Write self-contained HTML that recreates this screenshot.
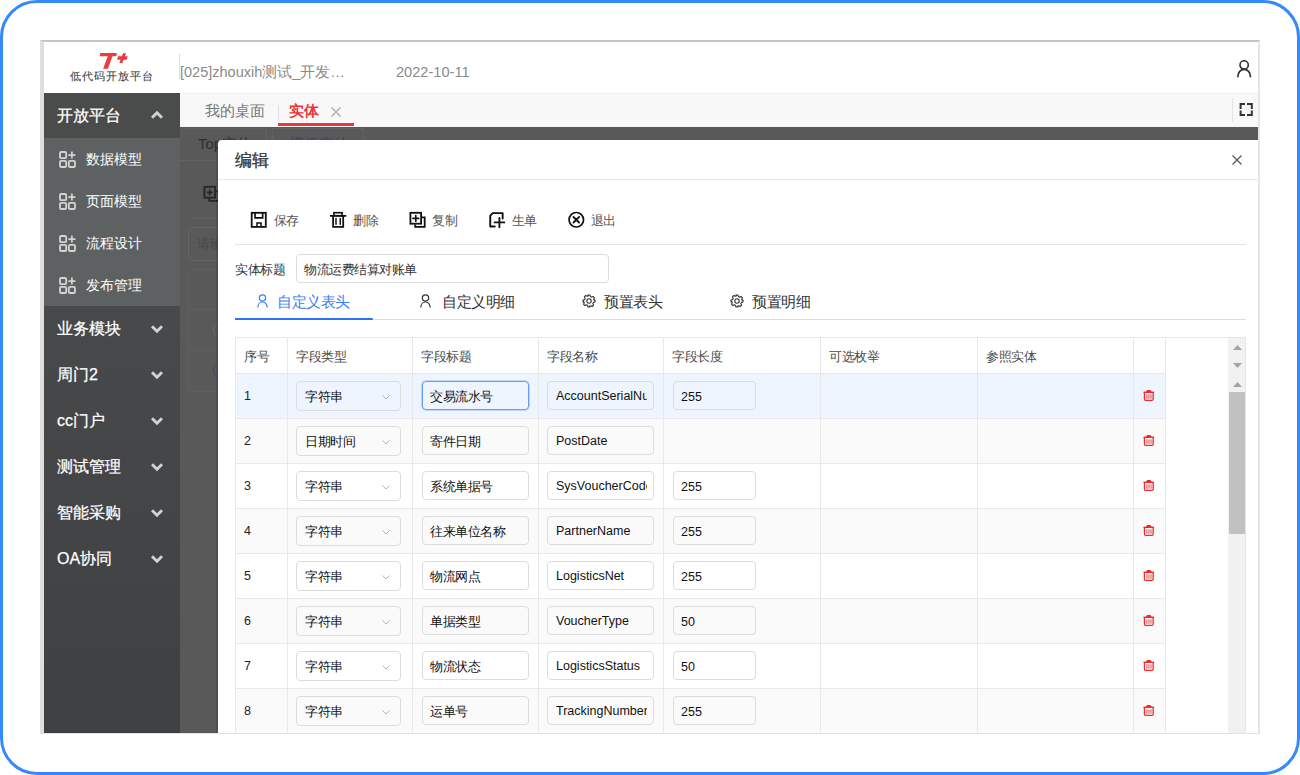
<!DOCTYPE html>
<html><head><meta charset="utf-8"><style>
*{box-sizing:border-box}
html,body{margin:0;padding:0}
body{width:1300px;height:775px;overflow:hidden;background:#fff;position:relative;font-family:"Liberation Sans",sans-serif;color:#333}
.abs{position:absolute}
.frame{position:absolute;left:0;top:0;width:1300px;height:775px;border:3px solid #3589fd;border-radius:37px}
.app{position:absolute;left:40px;top:40px;width:1220px;height:694px;border-top:2px solid #c4c4c4;border-left:4px solid #dedede;border-right:2px solid #e6e6e6;border-bottom:1px solid #e3e3e3;overflow:hidden;background:#fff}
/* header */
.logoT{position:absolute;left:99px;top:51px;font:italic bold 21px/1 "Liberation Sans",sans-serif;color:#e8383d}
.logoname{position:absolute;left:70px;top:70px;font-size:11px;line-height:13px;font-weight:normal;-webkit-text-stroke:0.1px #444;color:#444;letter-spacing:1px;white-space:nowrap}
.hdiv{position:absolute;left:179px;top:54px;width:1px;height:25px;background:#ddd}
.htitle{position:absolute;left:180px;top:63px;font-size:14.5px;line-height:18px;color:#8a8a8a;white-space:nowrap}
.hdate{position:absolute;left:396px;top:63px;font-size:14.6px;line-height:18px;color:#8a8a8a}
/* sidebar */
.side{position:absolute;left:44px;top:93px;width:136px;height:640px;background:linear-gradient(#494b4b 0px,#47494a 212px,#3f4041 640px)}
.side .grp{position:absolute;left:0;width:136px;height:46px;color:#fff;-webkit-text-stroke:0.25px #fff;font-size:16px;line-height:46px;padding-left:13px;white-space:nowrap}
.side .sub{position:absolute;left:0;top:45px;width:136px;height:168px;background:#5e6161}
.side .si{position:absolute;left:0;width:136px;height:42px;line-height:42px;color:#fff;font-size:14px;padding-left:42px;white-space:nowrap}
.side .si svg{position:absolute;left:15px;top:13px}
.chev{position:absolute;left:106px;top:18.5px;width:14px;height:10px}
/* tabbar */
.tabbar{position:absolute;left:180px;top:93px;width:1078px;height:34px;background:#f8f8f8;border-top:1px solid #eeeeee}
.tab1{position:absolute;left:25px;top:8px;font-size:15px;line-height:18px;color:#777}
.tabdiv{position:absolute;left:98px;top:11px;width:1px;height:16px;background:#dde}
.tab2{position:absolute;left:109px;top:8px;font-size:15px;line-height:18px;color:#e8383d;font-weight:bold}
.tabx{position:absolute;left:151px;top:13px}
.tabline{position:absolute;left:98px;top:29px;width:76px;height:3px;background:#e8383d}
.fsdiv{position:absolute;left:1052px;top:4px;width:1px;height:24px;background:#e3e3ea}
.fsic{position:absolute;left:1059px;top:8px}
/* overlay */
.ovl{position:absolute;left:180px;top:127px;width:1078px;height:606px;background:#595959}
/* modal */
.modal{position:absolute;left:218px;top:140px;width:1040px;height:600px;background:#fff;border-radius:4px 0 0 0}
.mtitle{position:absolute;left:17px;top:11px;font-size:17px;line-height:20px;color:#333;-webkit-text-stroke:0.3px #333}
.mclose{position:absolute;left:1014px;top:15px}
.mhr{position:absolute;left:0;top:39px;width:1042px;height:1px;background:#e8e8e8}
.tb{position:absolute;top:72px;height:17px;font-size:13px;letter-spacing:-.5px;line-height:17px;color:#555;white-space:nowrap}
.tb svg{position:absolute;left:0;top:-1px}
.tb span{position:absolute;top:0}
.tbhr{position:absolute;left:17px;top:104px;width:1011px;height:1px;background:#e3e3e3}
.lbl{position:absolute;left:17px;top:120.5px;font-size:13px;letter-spacing:-.5px;line-height:18px;color:#333}
.tinput{position:absolute;left:78px;top:114px;width:313px;height:29px;border:1px solid #dcdcdc;border-radius:4px;font-size:13px;letter-spacing:-.5px;line-height:29px;padding-left:7px;color:#333}
.tabs{position:absolute;left:17px;top:179px;width:1011px;height:1px;background:#dddddd}
.tabact{position:absolute;left:17px;top:178px;width:138px;height:2px;background:#2f72f6;border-radius:0 1px 1px 0}
.ttab{position:absolute;top:152px;font-size:15px;letter-spacing:-.5px;line-height:20px;color:#333;white-space:nowrap}
.ttab svg{position:absolute;top:2px}
/* table */
.clip{position:absolute;left:0;top:0;width:1258px;height:733px;overflow:hidden}
.modal{height:593px;overflow:hidden}
.tbox{position:absolute;left:235px;top:337px;width:1011px;height:420px;border:1px solid #e6e6e6}
.vl{position:absolute;width:1px;background:#e8e8e8}
.hl{position:absolute;height:1px;background:#e8e8e8}
.th{position:absolute;height:36px;line-height:39px;font-size:13px;letter-spacing:-.5px;color:#4a4a4a;white-space:nowrap}
.num{position:absolute;height:45px;line-height:47px;font-size:12.5px;color:#222}
.selbox{position:absolute;width:105px;height:30px;border:1px solid #dcdcdc;border-radius:4px;font-size:13px;letter-spacing:-.5px;line-height:30px;padding-left:8px;color:#111;white-space:nowrap}
.sch{position:absolute;left:85px;top:12.5px}
.inp{position:absolute;height:29px;border:1px solid #dcdcdc;border-radius:4px;font-size:12.5px;line-height:27px;padding-left:8px;color:#111;overflow:hidden;white-space:nowrap}
.inp.ttl{width:107px;font-size:13px;letter-spacing:-.5px;line-height:30px;padding-left:7px}
.inp.ttl.focus{border-color:#6a9ef4;box-shadow:0 0 0 .6px rgba(106,158,244,.7)}
.inp.nm{width:107px;line-height:29px}
.clipt{width:91px;overflow:hidden;white-space:nowrap}
.inp.len{width:83px;line-height:30px;padding-left:7px}
.trash{position:absolute}
.sb{position:absolute;left:1228px;top:338px;width:17px;height:400px;background:#f1f1f1}
.sbar{position:absolute;background:#c1c1c1}
.ovc{position:absolute}
.tbt{position:absolute;top:72px;height:17px;font-size:13px;letter-spacing:-.5px;line-height:17px;color:#555;white-space:nowrap}

</style></head><body>
<div class="frame"></div>
<div class="app"></div>
<!-- header -->
<svg class="abs" style="left:0;top:0" width="140" height="80" viewBox="0 0 140 80"><path d="M100.4 53h16.6l-0.9 3.3h-16.6z" fill="#ec3a3f"/><path d="M107.9 56h4.6l-4.6 12.7h-4.8z" fill="#ec3a3f"/><path d="M118 56.2h9.6l-0.9 3.5h-9.6z" fill="#ec3a3f"/><path d="M123 53.3h3l-3.6 9.6h-3z" fill="#ec3a3f"/></svg>
<div class="logoname">低代码开放平台</div>
<div class="hdiv"></div>
<div class="htitle">[025]zhouxih测试_开发…</div>
<div class="hdate">2022-10-11</div>
<svg class="abs" style="left:1236px;top:60px" width="17" height="18" viewBox="0 0 17 18"><circle cx="8.15" cy="4.9" r="4.15" fill="none" stroke="#333" stroke-width="1.6"/><path d="M1.9 16.6c0-4.2 2.8-7.2 6.25-7.2s6.25 3 6.25 7.2" fill="none" stroke="#333" stroke-width="1.7" stroke-linecap="round"/></svg>
<!-- sidebar -->
<div class="side">
  <div class="grp" style="top:0;height:45px;line-height:45px;background:#4a4c4c">开放平台<svg class="chev" style="top:17.3px" viewBox="0 0 14 10"><path d="M2 7.8L7 2.8L12 7.8" fill="none" stroke="#d2d2d2" stroke-width="2.9"/></svg></div>
  <div class="sub">
    <div class="si" style="top:0"><svg width="17" height="17" viewBox="0 0 17 17"><rect x="1" y="1" width="6.2" height="6.2" rx="1.3" fill="none" stroke="#d4d4d4" stroke-width="1.8"/><rect x="1" y="9.8" width="6.2" height="6.2" rx="1.3" fill="none" stroke="#d4d4d4" stroke-width="1.8"/><rect x="9.8" y="9.8" width="6.2" height="6.2" rx="1.3" fill="none" stroke="#d4d4d4" stroke-width="1.8"/><path d="M12.9 0.6v7M9.4 4.1h7" stroke="#d4d4d4" stroke-width="1.7"/></svg>数据模型</div>
    <div class="si" style="top:42px"><svg width="17" height="17" viewBox="0 0 17 17"><rect x="1" y="1" width="6.2" height="6.2" rx="1.3" fill="none" stroke="#d4d4d4" stroke-width="1.8"/><rect x="1" y="9.8" width="6.2" height="6.2" rx="1.3" fill="none" stroke="#d4d4d4" stroke-width="1.8"/><rect x="9.8" y="9.8" width="6.2" height="6.2" rx="1.3" fill="none" stroke="#d4d4d4" stroke-width="1.8"/><path d="M12.9 0.6v7M9.4 4.1h7" stroke="#d4d4d4" stroke-width="1.7"/></svg>页面模型</div>
    <div class="si" style="top:84px"><svg width="17" height="17" viewBox="0 0 17 17"><rect x="1" y="1" width="6.2" height="6.2" rx="1.3" fill="none" stroke="#d4d4d4" stroke-width="1.8"/><rect x="1" y="9.8" width="6.2" height="6.2" rx="1.3" fill="none" stroke="#d4d4d4" stroke-width="1.8"/><rect x="9.8" y="9.8" width="6.2" height="6.2" rx="1.3" fill="none" stroke="#d4d4d4" stroke-width="1.8"/><path d="M12.9 0.6v7M9.4 4.1h7" stroke="#d4d4d4" stroke-width="1.7"/></svg>流程设计</div>
    <div class="si" style="top:126px"><svg width="17" height="17" viewBox="0 0 17 17"><rect x="1" y="1" width="6.2" height="6.2" rx="1.3" fill="none" stroke="#d4d4d4" stroke-width="1.8"/><rect x="1" y="9.8" width="6.2" height="6.2" rx="1.3" fill="none" stroke="#d4d4d4" stroke-width="1.8"/><rect x="9.8" y="9.8" width="6.2" height="6.2" rx="1.3" fill="none" stroke="#d4d4d4" stroke-width="1.8"/><path d="M12.9 0.6v7M9.4 4.1h7" stroke="#d4d4d4" stroke-width="1.7"/></svg>发布管理</div>
  </div>
  <div class="grp" style="top:212px;line-height:48px">业务模块<svg class="chev" viewBox="0 0 14 10"><path d="M2 2.2L7 7.2L12 2.2" fill="none" stroke="#d2d2d2" stroke-width="2.9"/></svg></div>
  <div class="grp" style="top:258px;line-height:48px">周门2<svg class="chev" viewBox="0 0 14 10"><path d="M2 2.2L7 7.2L12 2.2" fill="none" stroke="#d2d2d2" stroke-width="2.9"/></svg></div>
  <div class="grp" style="top:304px;line-height:48px">cc门户<svg class="chev" viewBox="0 0 14 10"><path d="M2 2.2L7 7.2L12 2.2" fill="none" stroke="#d2d2d2" stroke-width="2.9"/></svg></div>
  <div class="grp" style="top:350px;line-height:48px">测试管理<svg class="chev" viewBox="0 0 14 10"><path d="M2 2.2L7 7.2L12 2.2" fill="none" stroke="#d2d2d2" stroke-width="2.9"/></svg></div>
  <div class="grp" style="top:396px;line-height:48px">智能采购<svg class="chev" viewBox="0 0 14 10"><path d="M2 2.2L7 7.2L12 2.2" fill="none" stroke="#d2d2d2" stroke-width="2.9"/></svg></div>
  <div class="grp" style="top:442px;line-height:48px">OA协同<svg class="chev" viewBox="0 0 14 10"><path d="M2 2.2L7 7.2L12 2.2" fill="none" stroke="#d2d2d2" stroke-width="2.9"/></svg></div>
</div>
<!-- tabbar -->
<div class="tabbar">
  <div class="tab1">我的桌面</div>
  <div class="tabdiv"></div>
  <div class="tab2">实体</div>
  <svg class="tabx" width="10" height="10" viewBox="0 0 10 10"><path d="M0.5 0.5l9 9M9.5 0.5l-9 9" stroke="#aaa" stroke-width="1.2"/></svg>
  <div class="tabline"></div>
  <div class="fsdiv"></div>
  <svg class="fsic" width="15" height="15" viewBox="0 0 15 15"><path d="M1.6 7V2H6M8 2H12.8V7M1.6 8.5V12.9H6M8 12.9H12.8V8.5" fill="none" stroke="#333" stroke-width="2"/></svg>
</div>
<!-- overlay -->
<div class="ovl"></div>
<div class="abs" style="left:180px;top:128px;width:87px;height:32px;border-right:1px solid #626262;border-top:1px solid #5f5f5f"></div>
<div class="abs" style="left:272px;top:128px;width:92px;height:32px;border:1px solid #626262;border-bottom:none"></div>
<div class="abs" style="left:198px;top:134px;font-size:15px;line-height:20px;color:#2e2e2e">Top实体</div>
<div class="abs" style="left:289px;top:134px;font-size:15px;line-height:20px;color:#34426a">模板实体</div>
<div class="abs" style="left:180px;top:160px;width:1078px;height:1px;background:#626262"></div>
<svg class="abs" style="left:203px;top:185px" width="18" height="18" viewBox="0 0 18 18"><rect x="1.4" y="1.8" width="10.7" height="10.9" fill="none" stroke="#262626" stroke-width="1.8"/><path d="M6.2 13.6V15.9H15.7V6.3H13" fill="none" stroke="#262626" stroke-width="1.8"/><path d="M6.8 4.6V10.2M3.95 7.4H9.65" stroke="#262626" stroke-width="1.7"/></svg>
<div class="abs" style="left:188px;top:218px;width:1070px;height:1px;background:#606060"></div>
<div class="abs" style="left:188px;top:227px;width:300px;height:34px;border:1px solid #666;border-radius:5px"></div>
<div class="abs" style="left:197px;top:235px;font-size:13px;line-height:17px;color:#4a4a4a">请输入</div>
<div class="abs" style="left:188px;top:269px;width:1060px;height:123px;border:1px solid #5f5f5f"></div>
<div class="abs" style="left:188px;top:309px;width:1060px;height:1px;background:#5f5f5f"></div>
<div class="abs" style="left:188px;top:350px;width:1060px;height:1px;background:#5f5f5f"></div>
<div class="abs" style="left:213px;top:323px;width:14px;height:14px;border:1px solid #6a6a6a;border-radius:50%"></div>
<div class="abs" style="left:213px;top:364px;width:14px;height:14px;border:1.2px solid #3d4a78;border-radius:50%"></div>
<div class="abs" style="left:216px;top:140px;width:2px;height:593px;background:rgba(0,0,0,.12)"></div>
<!-- modal -->
<div class="modal">
  <div class="mtitle">编辑</div>
  <svg class="mclose" width="10" height="10" viewBox="0 0 10 10"><path d="M0.5 0.5l9 9M9.5 0.5l-9 9" stroke="#555" stroke-width="1.2"/></svg>
  <div class="mhr"></div>
  <svg class="abs" style="left:32px;top:71px" width="18" height="18" viewBox="0 0 18 18"><rect x="1.7" y="1.8" width="14.1" height="14.1" fill="none" stroke="#111" stroke-width="1.8"/><path d="M5.05 1.8V6.85H12.65V1.8" fill="none" stroke="#111" stroke-width="1.7"/><path d="M6.95 16V11.95H11.05V16" fill="none" stroke="#111" stroke-width="1.5"/></svg>
  <div class="tbt" style="left:55.5px">保存</div>
  <svg class="abs" style="left:111px;top:71px" width="18" height="18" viewBox="0 0 18 18"><path d="M1 4.85H17.3" stroke="#111" stroke-width="1.8"/><rect x="4.9" y="1.7" width="8.2" height="3" fill="none" stroke="#111" stroke-width="1.6"/><path d="M4.1 4.85V15.9H14.2V4.85" fill="none" stroke="#111" stroke-width="1.8"/><path d="M7 7.4V13.2M11.2 7.4V13.2" stroke="#111" stroke-width="1.5" stroke-linecap="round"/></svg>
  <div class="tbt" style="left:135px">删除</div>
  <svg class="abs" style="left:191px;top:71px" width="18" height="18" viewBox="0 0 18 18"><rect x="1.4" y="1.8" width="10.7" height="10.9" fill="none" stroke="#111" stroke-width="1.8"/><path d="M6.2 13.6V15.9H15.7V6.3H13" fill="none" stroke="#111" stroke-width="1.8"/><path d="M6.8 4.6V10.2M3.95 7.4H9.65" stroke="#111" stroke-width="1.7" stroke-linecap="round"/></svg>
  <div class="tbt" style="left:214px">复制</div>
  <svg class="abs" style="left:271px;top:71px" width="18" height="18" viewBox="0 0 18 18"><path d="M5.8 15.55H1.25V4.6L3.7 2.1H13.65V7.5" fill="none" stroke="#111" stroke-width="1.9" stroke-linecap="round" stroke-linejoin="round"/><path d="M10.4 6.9V16.3M5.6 11.4H15.3" stroke="#111" stroke-width="1.9" stroke-linecap="round"/></svg>
  <div class="tbt" style="left:293.5px">生单</div>
  <svg class="abs" style="left:349px;top:71px" width="18" height="18" viewBox="0 0 18 18"><circle cx="9.3" cy="8.75" r="7.25" fill="none" stroke="#111" stroke-width="1.7"/><path d="M6.5 6L12.1 11.5M12.1 6L6.5 11.5" stroke="#111" stroke-width="1.8" stroke-linecap="round"/></svg>
  <div class="tbt" style="left:372.8px">退出</div>
  <div class="tbhr"></div>
  <div class="lbl">实体标题</div>
  <div class="tinput">物流运费结算对账单</div>
  <div class="ttab" style="left:39px;color:#3a7ef6"><svg style="left:0" width="11" height="14" viewBox="0 0 11 14"><circle cx="5.5" cy="4" r="3.2" fill="none" stroke="#3a7ef6" stroke-width="1.2"/><path d="M0.8 13.5c0-3.2 2.1-5.5 4.7-5.5s4.7 2.3 4.7 5.5" fill="none" stroke="#3a7ef6" stroke-width="1.2"/></svg><span style="position:absolute;left:20px;top:0">自定义表头</span></div>
  <div class="ttab" style="left:202px"><svg style="left:0" width="11" height="14" viewBox="0 0 11 14"><circle cx="5.5" cy="4" r="3.2" fill="none" stroke="#333" stroke-width="1.2"/><path d="M0.8 13.5c0-3.2 2.1-5.5 4.7-5.5s4.7 2.3 4.7 5.5" fill="none" stroke="#333" stroke-width="1.2"/></svg><span style="position:absolute;left:22px;top:0">自定义明细</span></div>
  <div class="ttab" style="left:364px"><svg style="left:0" width="14" height="14" viewBox="0 0 14 14"><circle cx="7" cy="7" r="2.2" fill="none" stroke="#333" stroke-width="1.1"/><path d="M6 1h2l.4 1.6 1.2.6 1.5-.8 1.4 1.4-.8 1.5.6 1.2L13 6v2l-1.6.4-.6 1.2.8 1.5-1.4 1.4-1.5-.8-1.2.6L8 13H6l-.4-1.6-1.2-.6-1.5.8-1.4-1.4.8-1.5-.6-1.2L1 8V6l1.6-.4.6-1.2-.8-1.5 1.4-1.4 1.5.8 1.2-.6z" fill="none" stroke="#333" stroke-width="1.1" stroke-linejoin="round"/></svg><span style="position:absolute;left:22px;top:0">预置表头</span></div>
  <div class="ttab" style="left:512px"><svg style="left:0" width="14" height="14" viewBox="0 0 14 14"><circle cx="7" cy="7" r="2.2" fill="none" stroke="#333" stroke-width="1.1"/><path d="M6 1h2l.4 1.6 1.2.6 1.5-.8 1.4 1.4-.8 1.5.6 1.2L13 6v2l-1.6.4-.6 1.2.8 1.5-1.4 1.4-1.5-.8-1.2.6L8 13H6l-.4-1.6-1.2-.6-1.5.8-1.4-1.4.8-1.5-.6-1.2L1 8V6l1.6-.4.6-1.2-.8-1.5 1.4-1.4 1.5.8 1.2-.6z" fill="none" stroke="#333" stroke-width="1.1" stroke-linejoin="round"/></svg><span style="position:absolute;left:22px;top:0">预置明细</span></div>
  <div class="tabs"></div>
  <div class="tabact"></div>
  </div>
<div class="clip">
<div class="tbox"></div>
<div class="sb"></div>
<div class="abs" style="left:235px;top:373px;width:930px;height:45px;background:#eef5fe"></div>
<div class="abs" style="left:235px;top:418px;width:930px;height:45px;background:#fafafa"></div>
<div class="abs" style="left:235px;top:463px;width:930px;height:45px;background:#ffffff"></div>
<div class="abs" style="left:235px;top:508px;width:930px;height:45px;background:#fafafa"></div>
<div class="abs" style="left:235px;top:553px;width:930px;height:45px;background:#ffffff"></div>
<div class="abs" style="left:235px;top:598px;width:930px;height:45px;background:#fafafa"></div>
<div class="abs" style="left:235px;top:643px;width:930px;height:45px;background:#ffffff"></div>
<div class="abs" style="left:235px;top:688px;width:930px;height:45px;background:#fafafa"></div>
<div class="vl" style="left:235px;top:337px;height:401px"></div>
<div class="vl" style="left:287px;top:337px;height:401px"></div>
<div class="vl" style="left:412px;top:337px;height:401px"></div>
<div class="vl" style="left:538px;top:337px;height:401px"></div>
<div class="vl" style="left:663px;top:337px;height:401px"></div>
<div class="vl" style="left:820px;top:337px;height:401px"></div>
<div class="vl" style="left:977px;top:337px;height:401px"></div>
<div class="vl" style="left:1133px;top:337px;height:401px"></div>
<div class="vl" style="left:1165px;top:337px;height:401px"></div>
<div class="hl" style="left:235px;top:337px;width:931px"></div>
<div class="hl" style="left:235px;top:373px;width:931px"></div>
<div class="hl" style="left:235px;top:418px;width:931px"></div>
<div class="hl" style="left:235px;top:463px;width:931px"></div>
<div class="hl" style="left:235px;top:508px;width:931px"></div>
<div class="hl" style="left:235px;top:553px;width:931px"></div>
<div class="hl" style="left:235px;top:598px;width:931px"></div>
<div class="hl" style="left:235px;top:643px;width:931px"></div>
<div class="hl" style="left:235px;top:688px;width:931px"></div>
<div class="hl" style="left:235px;top:733px;width:931px"></div>
<div class="th" style="left:244px;top:337px">序号</div>
<div class="th" style="left:296px;top:337px">字段类型</div>
<div class="th" style="left:421px;top:337px">字段标题</div>
<div class="th" style="left:547px;top:337px">字段名称</div>
<div class="th" style="left:672px;top:337px">字段长度</div>
<div class="th" style="left:829px;top:337px">可选枚举</div>
<div class="th" style="left:986px;top:337px">参照实体</div>
<div class="num" style="left:244px;top:373px">1</div>
<div class="selbox" style="left:296px;top:381px">字符串<svg class="sch" width="8" height="5" viewBox="0 0 8 5"><path d="M0.5 0.5L4 4l3.5-3.5" fill="none" stroke="#aaa" stroke-width="0.9"/></svg></div>
<div class="inp ttl focus" style="left:422px;top:381px">交易流水号</div>
<div class="inp nm" style="left:547px;top:381px"><div class="clipt">AccountSerialNu</div></div>
<div class="inp len" style="left:673px;top:381px">255</div>
<svg class="trash" style="left:1142.5px;top:389px" viewBox="0 0 12 13" width="12" height="13"><path d="M0.5 3.3H11.1" stroke="#ee2a2f" stroke-width="1.4"/><path d="M3.4 3.2L4.4 1.6H7.2L8.2 3.2" fill="#ee2a2f" stroke="#ee2a2f" stroke-width="1.1"/><path d="M1.45 3.6V10.2Q1.45 11.35 2.6 11.35H9Q10.15 11.35 10.15 10.2V3.6" fill="none" stroke="#ee2a2f" stroke-width="1.3"/><path d="M3.9 5.3v4.5M5.95 5.3v4.5M8 5.3v4.5" stroke="#ee2a2f" stroke-width="0.85"/></svg>
<div class="num" style="left:244px;top:418px">2</div>
<div class="selbox" style="left:296px;top:426px">日期时间<svg class="sch" width="8" height="5" viewBox="0 0 8 5"><path d="M0.5 0.5L4 4l3.5-3.5" fill="none" stroke="#aaa" stroke-width="0.9"/></svg></div>
<div class="inp ttl" style="left:422px;top:426px">寄件日期</div>
<div class="inp nm" style="left:547px;top:426px"><div class="clipt">PostDate</div></div>
<svg class="trash" style="left:1142.5px;top:434px" viewBox="0 0 12 13" width="12" height="13"><path d="M0.5 3.3H11.1" stroke="#ee2a2f" stroke-width="1.4"/><path d="M3.4 3.2L4.4 1.6H7.2L8.2 3.2" fill="#ee2a2f" stroke="#ee2a2f" stroke-width="1.1"/><path d="M1.45 3.6V10.2Q1.45 11.35 2.6 11.35H9Q10.15 11.35 10.15 10.2V3.6" fill="none" stroke="#ee2a2f" stroke-width="1.3"/><path d="M3.9 5.3v4.5M5.95 5.3v4.5M8 5.3v4.5" stroke="#ee2a2f" stroke-width="0.85"/></svg>
<div class="num" style="left:244px;top:463px">3</div>
<div class="selbox" style="left:296px;top:471px">字符串<svg class="sch" width="8" height="5" viewBox="0 0 8 5"><path d="M0.5 0.5L4 4l3.5-3.5" fill="none" stroke="#aaa" stroke-width="0.9"/></svg></div>
<div class="inp ttl" style="left:422px;top:471px">系统单据号</div>
<div class="inp nm" style="left:547px;top:471px"><div class="clipt">SysVoucherCode</div></div>
<div class="inp len" style="left:673px;top:471px">255</div>
<svg class="trash" style="left:1142.5px;top:479px" viewBox="0 0 12 13" width="12" height="13"><path d="M0.5 3.3H11.1" stroke="#ee2a2f" stroke-width="1.4"/><path d="M3.4 3.2L4.4 1.6H7.2L8.2 3.2" fill="#ee2a2f" stroke="#ee2a2f" stroke-width="1.1"/><path d="M1.45 3.6V10.2Q1.45 11.35 2.6 11.35H9Q10.15 11.35 10.15 10.2V3.6" fill="none" stroke="#ee2a2f" stroke-width="1.3"/><path d="M3.9 5.3v4.5M5.95 5.3v4.5M8 5.3v4.5" stroke="#ee2a2f" stroke-width="0.85"/></svg>
<div class="num" style="left:244px;top:508px">4</div>
<div class="selbox" style="left:296px;top:516px">字符串<svg class="sch" width="8" height="5" viewBox="0 0 8 5"><path d="M0.5 0.5L4 4l3.5-3.5" fill="none" stroke="#aaa" stroke-width="0.9"/></svg></div>
<div class="inp ttl" style="left:422px;top:516px">往来单位名称</div>
<div class="inp nm" style="left:547px;top:516px"><div class="clipt">PartnerName</div></div>
<div class="inp len" style="left:673px;top:516px">255</div>
<svg class="trash" style="left:1142.5px;top:524px" viewBox="0 0 12 13" width="12" height="13"><path d="M0.5 3.3H11.1" stroke="#ee2a2f" stroke-width="1.4"/><path d="M3.4 3.2L4.4 1.6H7.2L8.2 3.2" fill="#ee2a2f" stroke="#ee2a2f" stroke-width="1.1"/><path d="M1.45 3.6V10.2Q1.45 11.35 2.6 11.35H9Q10.15 11.35 10.15 10.2V3.6" fill="none" stroke="#ee2a2f" stroke-width="1.3"/><path d="M3.9 5.3v4.5M5.95 5.3v4.5M8 5.3v4.5" stroke="#ee2a2f" stroke-width="0.85"/></svg>
<div class="num" style="left:244px;top:553px">5</div>
<div class="selbox" style="left:296px;top:561px">字符串<svg class="sch" width="8" height="5" viewBox="0 0 8 5"><path d="M0.5 0.5L4 4l3.5-3.5" fill="none" stroke="#aaa" stroke-width="0.9"/></svg></div>
<div class="inp ttl" style="left:422px;top:561px">物流网点</div>
<div class="inp nm" style="left:547px;top:561px"><div class="clipt">LogisticsNet</div></div>
<div class="inp len" style="left:673px;top:561px">255</div>
<svg class="trash" style="left:1142.5px;top:569px" viewBox="0 0 12 13" width="12" height="13"><path d="M0.5 3.3H11.1" stroke="#ee2a2f" stroke-width="1.4"/><path d="M3.4 3.2L4.4 1.6H7.2L8.2 3.2" fill="#ee2a2f" stroke="#ee2a2f" stroke-width="1.1"/><path d="M1.45 3.6V10.2Q1.45 11.35 2.6 11.35H9Q10.15 11.35 10.15 10.2V3.6" fill="none" stroke="#ee2a2f" stroke-width="1.3"/><path d="M3.9 5.3v4.5M5.95 5.3v4.5M8 5.3v4.5" stroke="#ee2a2f" stroke-width="0.85"/></svg>
<div class="num" style="left:244px;top:598px">6</div>
<div class="selbox" style="left:296px;top:606px">字符串<svg class="sch" width="8" height="5" viewBox="0 0 8 5"><path d="M0.5 0.5L4 4l3.5-3.5" fill="none" stroke="#aaa" stroke-width="0.9"/></svg></div>
<div class="inp ttl" style="left:422px;top:606px">单据类型</div>
<div class="inp nm" style="left:547px;top:606px"><div class="clipt">VoucherType</div></div>
<div class="inp len" style="left:673px;top:606px">50</div>
<svg class="trash" style="left:1142.5px;top:614px" viewBox="0 0 12 13" width="12" height="13"><path d="M0.5 3.3H11.1" stroke="#ee2a2f" stroke-width="1.4"/><path d="M3.4 3.2L4.4 1.6H7.2L8.2 3.2" fill="#ee2a2f" stroke="#ee2a2f" stroke-width="1.1"/><path d="M1.45 3.6V10.2Q1.45 11.35 2.6 11.35H9Q10.15 11.35 10.15 10.2V3.6" fill="none" stroke="#ee2a2f" stroke-width="1.3"/><path d="M3.9 5.3v4.5M5.95 5.3v4.5M8 5.3v4.5" stroke="#ee2a2f" stroke-width="0.85"/></svg>
<div class="num" style="left:244px;top:643px">7</div>
<div class="selbox" style="left:296px;top:651px">字符串<svg class="sch" width="8" height="5" viewBox="0 0 8 5"><path d="M0.5 0.5L4 4l3.5-3.5" fill="none" stroke="#aaa" stroke-width="0.9"/></svg></div>
<div class="inp ttl" style="left:422px;top:651px">物流状态</div>
<div class="inp nm" style="left:547px;top:651px"><div class="clipt">LogisticsStatus</div></div>
<div class="inp len" style="left:673px;top:651px">50</div>
<svg class="trash" style="left:1142.5px;top:659px" viewBox="0 0 12 13" width="12" height="13"><path d="M0.5 3.3H11.1" stroke="#ee2a2f" stroke-width="1.4"/><path d="M3.4 3.2L4.4 1.6H7.2L8.2 3.2" fill="#ee2a2f" stroke="#ee2a2f" stroke-width="1.1"/><path d="M1.45 3.6V10.2Q1.45 11.35 2.6 11.35H9Q10.15 11.35 10.15 10.2V3.6" fill="none" stroke="#ee2a2f" stroke-width="1.3"/><path d="M3.9 5.3v4.5M5.95 5.3v4.5M8 5.3v4.5" stroke="#ee2a2f" stroke-width="0.85"/></svg>
<div class="num" style="left:244px;top:688px">8</div>
<div class="selbox" style="left:296px;top:696px">字符串<svg class="sch" width="8" height="5" viewBox="0 0 8 5"><path d="M0.5 0.5L4 4l3.5-3.5" fill="none" stroke="#aaa" stroke-width="0.9"/></svg></div>
<div class="inp ttl" style="left:422px;top:696px">运单号</div>
<div class="inp nm" style="left:547px;top:696px"><div class="clipt">TrackingNumber</div></div>
<div class="inp len" style="left:673px;top:696px">255</div>
<svg class="trash" style="left:1142.5px;top:704px" viewBox="0 0 12 13" width="12" height="13"><path d="M0.5 3.3H11.1" stroke="#ee2a2f" stroke-width="1.4"/><path d="M3.4 3.2L4.4 1.6H7.2L8.2 3.2" fill="#ee2a2f" stroke="#ee2a2f" stroke-width="1.1"/><path d="M1.45 3.6V10.2Q1.45 11.35 2.6 11.35H9Q10.15 11.35 10.15 10.2V3.6" fill="none" stroke="#ee2a2f" stroke-width="1.3"/><path d="M3.9 5.3v4.5M5.95 5.3v4.5M8 5.3v4.5" stroke="#ee2a2f" stroke-width="0.85"/></svg>
<div class="sbar" style="left:1229px;top:392px;width:16px;height:142px"></div>
<svg class="abs" style="left:1232.8px;top:345px" width="9" height="5" viewBox="0 0 8.6 4.6"><path d="M0 4.6L4.3 0L8.6 4.6z" fill="#a3a3a3"/></svg>
<svg class="abs" style="left:1232.8px;top:362.7px" width="9" height="5" viewBox="0 0 8.6 4.6"><path d="M0 0L4.3 4.6L8.6 0z" fill="#a3a3a3"/></svg>
<svg class="abs" style="left:1232.8px;top:381.7px" width="9" height="5" viewBox="0 0 8.6 4.6"><path d="M0 4.6L4.3 0L8.6 4.6z" fill="#a3a3a3"/></svg>
</div>

</body></html>
